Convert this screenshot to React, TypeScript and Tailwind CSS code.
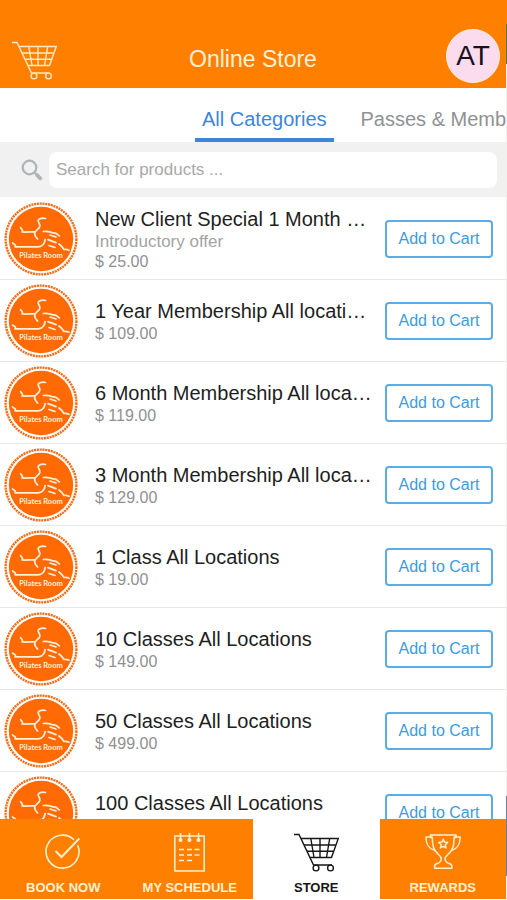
import React, { useState } from 'react';
import clsx from 'clsx';

type IconProps = { className?: string };

const products = [
  { id: 1, name: 'New Client Special 1 Month …', note: 'Introductory offer', price: '$ 25.00' },
  { id: 2, name: '1 Year Membership All locati…', price: '$ 109.00' },
  { id: 3, name: '6 Month Membership All loca…', price: '$ 119.00' },
  { id: 4, name: '3 Month Membership All loca…', price: '$ 129.00' },
  { id: 5, name: '1 Class All Locations', price: '$ 19.00' },
  { id: 6, name: '10 Classes All Locations', price: '$ 149.00' },
  { id: 7, name: '50 Classes All Locations', price: '$ 499.00' },
  { id: 8, name: '100 Classes All Locations' },
];

function CartIcon({ className }: IconProps) {
  return (
    <svg viewBox="0 0 45 39" width="45" height="39" fill="none" stroke="currentColor" strokeWidth="1.4" className={className} aria-hidden="true">
      <path d="M0 1.5h5L19.5 32H38" />
      <path d="M7 5.5h37.3L37.5 24.5H16M10 12h32M13 18.3h27" />
      <path d="M16.8 5.5L20 24.5M26 5.5v19M35.7 5.5L32.5 24.5" />
      <circle cx="22" cy="35" r="2.9" />
      <circle cx="36.5" cy="35" r="2.9" />
    </svg>
  );
}

function BookIcon({ className }: IconProps) {
  return (
    <svg viewBox="0 0 36 36" width="36" height="36" fill="none" stroke="currentColor" strokeWidth="1.6" className={className} aria-hidden="true">
      <path d="M29 5.8A16.5 16.5 0 1 0 32.7 11.2" />
      <path d="M10.500 17l6 6L34.300 4.500" strokeWidth="2" />
    </svg>
  );
}

function ScheduleIcon({ className }: IconProps) {
  return (
    <svg viewBox="0 0 31 39" width="31" height="39" fill="none" stroke="currentColor" strokeWidth="1.5" className={className} aria-hidden="true">
      <rect x="0.8" y="3" width="29.4" height="35" />
      <path d="M6.5 0v7M15.5 0v7M24.5 0v7" />
      <g fill="currentColor" stroke="none">
        <circle cx="6.5" cy="7" r="2" />
        <circle cx="15.5" cy="7" r="2" />
        <circle cx="24.5" cy="7" r="2" />
      </g>
      <path d="M5 16.5h5M13 16.5h5M20.5 16.5h5M5 22h5M13 22h5M20.5 22h5M5 27.5h5M13 27.5h5" />
    </svg>
  );
}

function TrophyIcon({ className }: IconProps) {
  return (
    <svg viewBox="0 0 36 36" width="36" height="36" fill="none" stroke="currentColor" strokeWidth="1.5" strokeLinejoin="round" className={className} aria-hidden="true">
      <path d="M5.3 1h25.800v2.500h-2c0 8-1.200 13-6.600 17.500-3.200 2.600-3.200 5.200-.5 7.500 1.500 1.300 4.800.8 4.800 3.500v2.300H9.600V32c0-2.700 3.300-2.200 4.800-3.500 2.700-2.300 2.700-4.900-.5-7.500C8.500 16.500 7.300 11.500 7.300 3.500h-2z" />
      <path d="M7.300 3H1c0 7.500 2.200 11.500 9 13.500M29.100 3h6.100c0 7.500-2.200 11.500-8.800 13.500" />
      <path d="M18.200 5.200l1.300 2.900 3.200.4-2.400 2.200.7 3.200-2.800-1.600-2.800 1.600.7-3.200-2.400-2.200 3.200-.4z" />
    </svg>
  );
}

function SearchIcon({ className }: IconProps) {
  return (
    <svg viewBox="0 0 22 22" width="22" height="22" fill="none" stroke="currentColor" className={className} aria-hidden="true">
      <circle cx="8.5" cy="8.5" r="6.8" strokeWidth="2.3" />
      <path d="M13.5 13.5l2 2" strokeWidth="2.3" />
      <path d="M16 16l3.300 3.300" strokeWidth="3.8" strokeLinecap="round" />
    </svg>
  );
}

function StudioLogo() {
  return (
    <svg viewBox="0 0 74 74" className="size-[74px] shrink-0" role="img" aria-label="Studio logo">
      <circle cx="37" cy="37" r="35.4" fill="none" stroke="#f0701c" strokeWidth="2.4" strokeDasharray="2.1 0.7" />
      <circle cx="37" cy="37" r="32.2" fill="#ff6a05" />
      <g fill="none" stroke="#fff0dc" strokeWidth="1.7" strokeLinecap="round" strokeLinejoin="round">
        <path d="M41.500 16.500c-4-1-8 .5-7.200 3 .6 2 2 2.500 1.500 5-.8 3-5 3.500-5.200 7-.1 2.500 1.500 4 3 5.500" />
        <path d="M16.600 25.600c1 1.500 3 3 1.500 4.400 4 .3 8-.2 12.500-.2" />
        <path d="M39.300 29.500c4-.5 7 0 10 1.500 2-.5 4 1 6 3M46 33l6 2" />
        <path d="M8.600 41c1 1.200 4 2 2.500 3.800 8 .2 17 .2 23 0 4-.3 6.500-3 7-7.200M44 37.600l8 3M45 43.500l6 2M55 42c2 1.500 4 3 5 5.500 2-.5 3.500 0 5 .8" />
      </g>
      <text x="37" y="56" textAnchor="middle" fill="#fff0dc" fontSize="7.5" fontWeight="bold" fontFamily="Lato, sans-serif">
        Pilates Room
      </text>
    </svg>
  );
}

const navigation = [
  { id: 'book', name: 'BOOK NOW', icon: BookIcon },
  { id: 'schedule', name: 'MY SCHEDULE', icon: ScheduleIcon },
  { id: 'store', name: 'STORE', icon: CartIcon },
  { id: 'rewards', name: 'REWARDS', icon: TrophyIcon },
];

function App() {
  const [currentPage, setCurrentPage] = useState('store');
  const [query, setQuery] = useState('');

  return (
    <div className="flex h-screen bg-white font-['Liberation_Sans',Arial,sans-serif]">
      <div className="flex min-w-0 flex-1 flex-col pb-px">
        <header className="grid h-[88px] shrink-0 grid-cols-[1fr_auto_1fr] items-end bg-[#ff8000] px-3 pb-[5px]">
          <button type="button" aria-label="Cart" className="justify-self-start pb-[3px] text-[#ffe9c4]">
            <CartIcon />
          </button>
          <h1 className="pb-2 text-[23px] leading-8 text-[#fff1d6]">Online Store</h1>
          <button type="button" className="-mr-[6px] size-[54px] justify-self-end rounded-full border border-[#ffeedd] bg-[#fbdcee] text-[28px] text-[#17131a]">
            AT
          </button>
        </header>

        <nav className="flex h-[54px] shrink-0 items-end gap-5 overflow-hidden whitespace-nowrap pl-[195px] text-xl">
          <a href="#all" className="border-b-4 border-[#3b86dc] px-[7px] pb-[7px] leading-6 text-[#3b86dc]">
            All Categories
          </a>
          <a href="#passes" className="border-b-4 border-transparent px-[7px] pb-[7px] leading-6 text-[#8f9294]">
            Passes &amp; Memberships
          </a>
        </nav>

        <div className="flex h-[55px] shrink-0 items-center bg-[#f1f1f1] pl-[21px] pr-[9px]">
          <label htmlFor="search" aria-label="Search" className="mr-1.5 text-[#b0b5b7]">
            <SearchIcon />
          </label>
          <input
            id="search"
            type="text"
            value={query}
            onChange={(e) => setQuery(e.target.value)}
            placeholder="Search for products ..."
            className="h-9 min-w-0 flex-1 rounded-lg bg-white px-[7px] text-[17px] text-[#222] outline-none placeholder:text-[#a9a9a9]"
          />
        </div>

        <ul className="min-h-0 flex-1 overflow-hidden pt-px">
          {products.map((product) => (
            <li key={product.id} className="flex h-[82px] items-center border-b border-[#e8e8e8] pl-1 pr-[13px]">
              <StudioLogo />
              <div className="ml-[17px] min-w-0 flex-1 whitespace-nowrap text-[#8f9091]">
                <h2 className="text-xl leading-[26px] text-[#1e1e1e]">{product.name}</h2>
                {product.note && <p className="text-[17px] leading-5 text-[#a2a3a4]">{product.note}</p>}
                <p className="h-5 text-base leading-5">{product.price}</p>
              </div>
              <button type="button" className="h-[38px] w-[108px] shrink-0 rounded border-2 border-[#5aace6] bg-white text-base text-[#3a9ce0]">
                Add to Cart
              </button>
            </li>
          ))}
        </ul>

        <nav className="grid h-20 shrink-0 grid-cols-4 bg-[#ff8000]">
          {navigation.map(({ id, name, icon: Icon }) => (
            <button
              key={id}
              type="button"
              onClick={() => setCurrentPage(id)}
              className={clsx(
                'flex flex-col items-center justify-end pb-[3px] text-[13px] font-bold leading-4',
                currentPage === id ? 'bg-white text-[#161616]' : 'text-[#fff0d2]'
              )}
            >
              <span className="flex h-12 items-center justify-center pb-2">
                <Icon />
              </span>
              {name}
            </button>
          ))}
        </nav>
      </div>

      {/* Thin edge of the window */}
      <div className="flex w-px shrink-0 flex-col bg-[#f0f0ee]">
        <div className="h-6 bg-[#ff8000]" />
        <div className="h-10 bg-[#5c7a35]" />
        <div className="flex-1" />
        <div className="h-20 bg-[#6f7da0]" />
        <div className="h-6" />
      </div>
    </div>
  );
}

export default App;
